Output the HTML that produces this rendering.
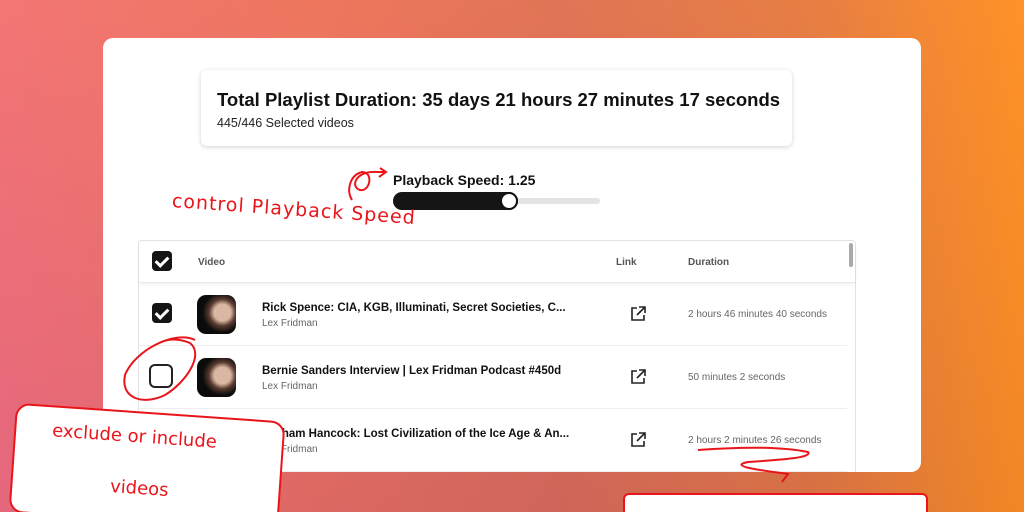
<!DOCTYPE html>
<html style="overflow:hidden;width:1024px;height:512px"><head><style>
*{margin:0;padding:0;box-sizing:border-box}
body{width:1024px;height:512px;overflow:hidden;position:relative;font-family:"Liberation Sans",sans-serif;
background:linear-gradient(90deg,#f06e88 0%,#e8706a 30%,#d76c5e 55%,#e07a45 80%,#ff9420 100%);}
.bg2{position:absolute;inset:0;background:linear-gradient(180deg,rgba(255,140,60,0.25),rgba(160,60,60,0.15))}
.card{position:absolute;left:103px;top:38px;width:818px;height:434px;background:#fff;border-radius:10px;overflow:hidden}
.sum{position:absolute;left:98px;top:32px;width:591px;height:76px;border-radius:6px;box-shadow:0 1px 5px rgba(0,0,0,.18);padding:19px 16px}
.sum h1{font-size:18.5px;font-weight:bold;color:#111;white-space:nowrap}
.sum p{font-size:12.5px;color:#222;margin-top:5px}
.ps{position:absolute;left:290px;top:134px;font-size:14px;font-weight:bold;color:#111}
.track{position:absolute;left:290px;top:160px;width:207px;height:6px;border-radius:3px;background:#e4e4e4}
.fill{position:absolute;left:290px;top:154px;width:125px;height:18px;border-radius:9px;background:#151515}
.thumb{position:absolute;left:397px;top:154px;width:18px;height:18px;border-radius:50%;background:#fff;border:2.5px solid #111}
.tbl{position:absolute;left:35px;top:202px;width:718px;height:240px;border:1px solid #e3e3e3;border-radius:4px}
.hdr{height:42px;border-bottom:1px solid #e8e8e8;box-shadow:0 2px 4px rgba(0,0,0,.06);position:relative;font-size:10px;color:#555;font-weight:bold}
.row{position:absolute;left:0;width:708px;height:63px;border-bottom:1px solid #eee}
.cb{position:absolute;left:13px;width:20px;height:20px;border-radius:4px;background:#151515}
.cb::after{content:"";position:absolute;left:6px;top:3px;width:5px;height:10px;border:solid #fff;border-width:0 3px 3px 0;transform:rotate(45deg)}
.cb.off{background:#fff;border:2px solid #222;width:24px;height:24px;border-radius:6px}
.cb.off::after{display:none}
.th{position:absolute;left:58px;top:12px;width:39px;height:39px;border-radius:9px;background:radial-gradient(circle at 65% 45%,#d9b7a2 0 25%,#5a3b30 40%,#0b0b0b 60%)}
.t{position:absolute;left:123px;top:19px;font-size:11.5px;font-weight:bold;color:#111}
.a{position:absolute;left:123px;top:35px;font-size:10px;color:#666}
.lk{position:absolute;left:490px;top:22px}
.d{position:absolute;left:549px;top:26px;font-size:10px;color:#666}
.hw{position:absolute;font-family:"DejaVu Sans",sans-serif;color:#e8151b;white-space:nowrap}
.note{position:absolute;background:#fff;border:2px solid #e8151b;border-radius:14px}
</style></head><body>
<div class="bg2"></div>
<div class="card">
 <div class="sum"><h1>Total Playlist Duration: 35 days 21 hours 27 minutes 17 seconds</h1><p>445/446 Selected videos</p></div>
 <div class="ps">Playback Speed: 1.25</div>
 <div class="track"></div><div class="fill"></div><div class="thumb"></div>
 <div class="tbl">
  <div class="hdr"><div class="cb" style="top:10px"></div><span style="position:absolute;left:59px;top:16px">Video</span><span style="position:absolute;left:477px;top:16px">Link</span><span style="position:absolute;left:549px;top:16px">Duration</span>
  <div style="position:absolute;left:710px;top:2px;width:4px;height:24px;border-radius:2px;background:#aaa"></div></div>
  <div class="row" style="top:42px"><div class="cb" style="top:20px"></div><div class="th"></div><div class="t">Rick Spence: CIA, KGB, Illuminati, Secret Societies, C...</div><div class="a">Lex Fridman</div>
   <svg class="lk" width="18" height="18" viewBox="0 0 18 18" fill="none" stroke="#222" stroke-width="1.6"><path d="M8 3H3v12h12v-5M10 2h6v6M16 2l-8 8"/></svg><div class="d">2 hours 46 minutes 40 seconds</div></div>
  <div class="row" style="top:105px"><div class="cb off" style="top:18px;left:10px"></div><div class="th"></div><div class="t">Bernie Sanders Interview | Lex Fridman Podcast #450d</div><div class="a">Lex Fridman</div>
   <svg class="lk" width="18" height="18" viewBox="0 0 18 18" fill="none" stroke="#222" stroke-width="1.6"><path d="M8 3H3v12h12v-5M10 2h6v6M16 2l-8 8"/></svg><div class="d">50 minutes 2 seconds</div></div>
  <div class="row" style="top:168px"><div class="th"></div><div class="t">Graham Hancock: Lost Civilization of the Ice Age &amp; An...</div><div class="a">Lex Fridman</div>
   <svg class="lk" width="18" height="18" viewBox="0 0 18 18" fill="none" stroke="#222" stroke-width="1.6"><path d="M8 3H3v12h12v-5M10 2h6v6M16 2l-8 8"/></svg><div class="d">2 hours 2 minutes 26 seconds</div></div>
 </div>
</div>
<div class="hw" style="left:172px;top:190px;font-size:19px;letter-spacing:1px;transform:rotate(4deg);transform-origin:left">control Playback Speed</div>
<svg style="position:absolute;left:0;top:0" width="1024" height="512" fill="none" stroke="#e8151b" stroke-width="2">
<path d="M352 200c-6-10 -2-25 10-28c12 0 8 20-2 18c-10-3-5-20 18-18l6 0M380 168l6 4-7 5"/>
<path d="M195 340c-20-10-60 10-70 35c-5 25 20 30 40 20c20-12 40-40 25-52c-20-8-30 0-35 2"/>
<path d="M698 450c40-3 80-4 110 2c5 6-30 8-60 10c-20 4 10 8 40 12l-6 8"/>
</svg>
<div class="note" style="left:12px;top:412px;width:270px;height:110px;transform:rotate(4deg)"></div>
<div class="hw" style="left:52px;top:426px;font-size:18px;transform:rotate(4deg)">exclude or include</div>
<div class="hw" style="left:110px;top:478px;font-size:18px;transform:rotate(4deg)">videos</div>
<div class="note" style="left:623px;top:493px;width:305px;height:40px;border-radius:6px"></div>
</body></html>
